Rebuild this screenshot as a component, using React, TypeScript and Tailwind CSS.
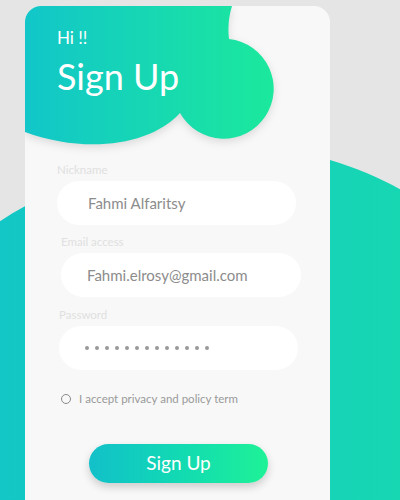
export default function App() {
    const dots = Array.from({ length: 13 })

    return (
        <div
            className="relative w-[400px] h-[500px] overflow-hidden bg-[#e5e5e5]"
            style={{ fontFamily: "Lato, 'Open Sans', sans-serif" }}
        >
            {/* teal backdrop */}
            <svg
                className="absolute inset-0"
                width="400"
                height="500"
                viewBox="0 0 400 500"
            >
                <defs>
                    <linearGradient id="bgGrad" x1="0" y1="0" x2="1" y2="0">
                        <stop offset="0" stopColor="#12c6c6" />
                        <stop offset="1" stopColor="#17d7b2" />
                    </linearGradient>
                </defs>
                <path
                    d="M-20,236 C60,170 230,130 330,160 C360,169 385,180 410,195 L410,510 L-20,510 Z"
                    fill="url(#bgGrad)"
                />
            </svg>

            <div className="relative ml-[25px] mt-[6px] w-[305px] h-[530px] rounded-[16px] bg-[#f8f8f8] overflow-hidden">
                {/* header blob */}
                <svg
                    className="absolute left-0 top-0"
                    width="305"
                    height="160"
                    viewBox="0 0 305 160"
                    style={{ filter: "drop-shadow(0 3px 4px rgba(0,0,0,0.12))" }}
                >
                    <defs>
                        <linearGradient id="blobGrad" x1="0" y1="0" x2="250" y2="0" gradientUnits="userSpaceOnUse">
                            <stop offset="0" stopColor="#12c6c9" />
                            <stop offset="1" stopColor="#1be99c" />
                        </linearGradient>
                    </defs>
                    <path
                        d="M0,0 H207 Q202,16 204,33 A50,50 0 1 1 155,107 C125,140 60,148 0,126 Z"
                        fill="url(#blobGrad)"
                    />
                </svg>

                <div className="relative px-[32px] pt-[22px]">
                    <div className="text-[17px] leading-[20px] text-white">Hi !!</div>
                    <h1 className="mt-[6px] text-[36px] leading-[44px] text-white font-normal">
                        Sign Up
                    </h1>

                    <div className="mt-[65px] text-[11.5px] leading-[14px] text-[#e0e0e0]">
                        Nickname
                    </div>
                    <div className="mt-[4px] w-[239px] h-[44px] rounded-full bg-white flex items-center pl-[31px] text-[15px] text-[#8c8c8c]">
                        Fahmi Alfaritsy
                    </div>

                    <div className="mt-[10px] ml-[4px] text-[11.5px] leading-[14px] text-[#e0e0e0]">
                        Email access
                    </div>
                    <div className="mt-[4px] ml-[4px] w-[240px] h-[44px] rounded-full bg-white flex items-center pl-[26px] text-[15px] text-[#8c8c8c]">
                        Fahmi.elrosy@gmail.com
                    </div>

                    <div className="mt-[11px] ml-[2px] text-[11.5px] leading-[14px] text-[#e0e0e0]">
                        Password
                    </div>
                    <div className="mt-[4px] ml-[2px] w-[239px] h-[44px] rounded-full bg-white flex items-center gap-[6px] pl-[26px]">
                        {dots.map((_, i) => (
                            <span key={i} className="w-[4px] h-[4px] rounded-full bg-[#9a9a9a]" />
                        ))}
                    </div>

                    <div className="mt-[22px] ml-[4px] flex items-center gap-[8px] h-[14px]">
                        <span className="w-[10px] h-[10px] rounded-full border border-[#8a8a8a]" />
                        <span className="text-[11.5px] leading-[14px] text-[#9a9a9a]">
                            I accept privacy and policy term
                        </span>
                    </div>

                    <button className="mt-[38px] ml-[32px] w-[179px] h-[39px] rounded-full bg-gradient-to-r from-[#13c0c9] to-[#1ef296] text-white text-[19px] shadow-[0_4px_8px_rgba(0,0,0,0.18)]">
                        Sign Up
                    </button>
                </div>
            </div>
        </div>
    )
}
